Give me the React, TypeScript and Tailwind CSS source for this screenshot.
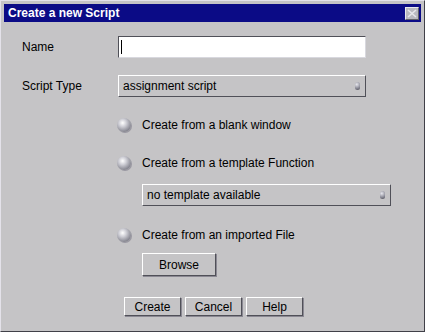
import React from 'react'

const font = { fontFamily: '"Liberation Sans", Arial, sans-serif' }

function Radio({ label }: { label: string }) {
  return (
    <div className="flex items-center h-[16px]">
      <span className="w-[14px] h-[14px] rounded-full bg-[radial-gradient(circle_at_40%_35%,#ffffff_0%,#cfcfd6_30%,#8a8a94_70%,#55555f_100%)] shadow-[1px_1px_0_#9a98a2]" />
      <span className="ml-[11px] text-[12px] text-black">{label}</span>
    </div>
  )
}

function Select({ value, w }: { value: string; w: string }) {
  return (
    <div className={`${w} h-[22px] flex items-center justify-between border border-t-white border-l-white border-b-[#505058] border-r-[#505058] pl-[4px] pr-[5px]`}>
      <span className="text-[12px] text-black">{value}</span>
      <span className="w-[5px] h-[8px] rounded-full bg-[radial-gradient(circle_at_35%_30%,#e8e8ee_0%,#8a8a96_60%,#4a4a54_100%)]" />
    </div>
  )
}

function Button({ label, w }: { label: string; w: string }) {
  return (
    <button className={`${w} flex items-center justify-center text-[12px] text-black border border-t-white border-l-white border-b-[#505058] border-r-[#505058] shadow-[1px_1px_0_#8a8892]`}>
      {label}
    </button>
  )
}

export default function App() {
  return (
    <div style={font} className="w-[425px] h-[332px] bg-[#c5c4c6] border border-t-[#e4e2ea] border-l-[#e4e2ea] border-b-[#404048] border-r-[#404048] p-[3px] flex flex-col">
      <div className="h-[18px] bg-[#0b0b86] flex items-center justify-between pl-[4px] pr-[2px]">
        <span className="text-white font-bold text-[12px]">Create a new Script</span>
        <span className="w-[14px] h-[13px] bg-[#b8b8c0] border border-t-[#e8e8ee] border-l-[#e8e8ee] border-b-[#606068] border-r-[#606068] flex items-center justify-center">
          <svg width="10" height="9" viewBox="0 0 10 9">
            <path d="M1 1 L9 8 M9 1 L1 8" stroke="#e6e6ec" strokeWidth="1.6" />
          </svg>
        </span>
      </div>

      <div className="pl-[18px] pt-[14px] flex flex-col">
        <div className="flex items-center h-[22px]">
          <span className="w-[96px] text-[12px] text-black">Name</span>
          <div className="w-[248px] h-[22px] bg-white border border-t-[#505058] border-l-[#505058] border-b-[#d8d8de] border-r-[#d8d8de] flex items-center pl-[2px]">
            <span className="w-px h-[14px] bg-black" />
          </div>
        </div>

        <div className="flex items-center h-[22px] mt-[17px]">
          <span className="w-[96px] text-[12px] text-black">Script Type</span>
          <Select value="assignment script" w="w-[248px]" />
        </div>

        <div className="pl-[95px] flex flex-col">
          <div className="mt-[20px]">
            <Radio label="Create from a blank window" />
          </div>
          <div className="mt-[22px]">
            <Radio label="Create from a template Function" />
          </div>
          <div className="pl-[25px] mt-[13px]">
            <Select value="no template available" w="w-[249px]" />
          </div>
          <div className="mt-[21px]">
            <Radio label="Create from an imported File" />
          </div>
          <div className="pl-[25px] mt-[10px]">
            <Button label="Browse" w="w-[74px] h-[23px]" />
          </div>
        </div>

        <div className="flex gap-[4px] pl-[102px] mt-[21px]">
          <Button label="Create" w="w-[57px] h-[19px]" />
          <Button label="Cancel" w="w-[57px] h-[19px]" />
          <Button label="Help" w="w-[57px] h-[19px]" />
        </div>
      </div>
    </div>
  )
}
